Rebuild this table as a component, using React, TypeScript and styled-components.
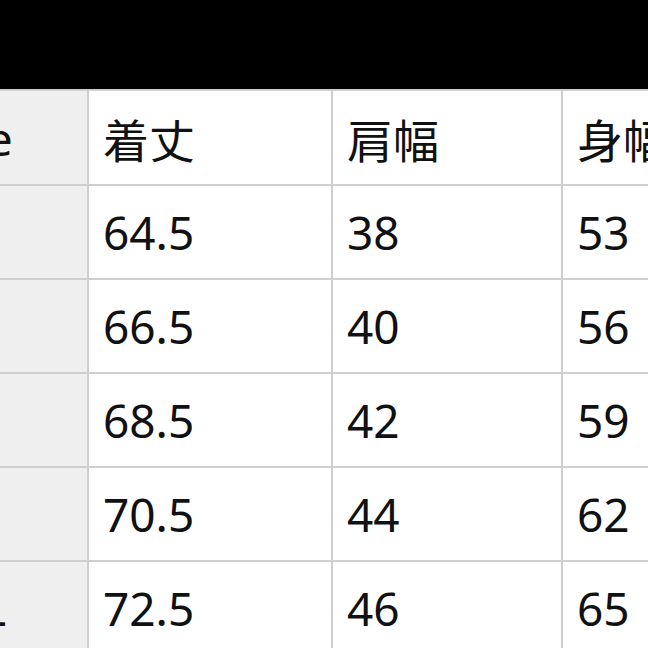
import React from "react";
import styled, { createGlobalStyle } from "styled-components";

const Global = createGlobalStyle`
  html, body { margin: 0; padding: 0; background: #ffffff; }
  body { width: 648px; height: 648px; overflow: hidden; }
`;

const Page = styled.div`
  width: 648px;
  height: 648px;
  overflow: hidden;
  display: flex;
  flex-direction: column;
  background: #ffffff;
`;

const TopBar = styled.div`
  height: 89px;
  flex: none;
  background: #000000;
`;

const Grid = styled.div`
  margin-left: -86px;
  display: grid;
  grid-template-columns: 173px 242px 228px 228px;
  grid-template-rows: 93px repeat(5, 92px);
  gap: 2px;
  padding-top: 2px;
  background: #cfcfcf;
  width: max-content;
`;

const Cell = styled.div<{ $label?: boolean }>`
  background: ${(p) => (p.$label ? "#efefef" : "#ffffff")};
  display: flex;
  align-items: center;
  padding-left: 14px;
  font-family: "Noto Sans", "Noto Sans CJK JP", sans-serif;
  font-size: 46px;
  color: #111111;
  white-space: nowrap;
  overflow: hidden;
`;

const headers = ["Size", "着丈", "肩幅", "身幅"];
const rows = [
  ["S", "64.5", "38", "53"],
  ["M", "66.5", "40", "56"],
  ["L", "68.5", "42", "59"],
  ["XL", "70.5", "44", "62"],
  ["XXL", "72.5", "46", "65"],
];

export default function App() {
  return (
    <Page>
      <Global />
      <TopBar />
      <Grid>
        {headers.map((h, i) => (
          <Cell key={h} $label={i === 0}>
            {h}
          </Cell>
        ))}
        {rows.map((r) =>
          r.map((v, i) => (
            <Cell key={r[0] + i} $label={i === 0}>
              {v}
            </Cell>
          ))
        )}
      </Grid>
    </Page>
  );
}
